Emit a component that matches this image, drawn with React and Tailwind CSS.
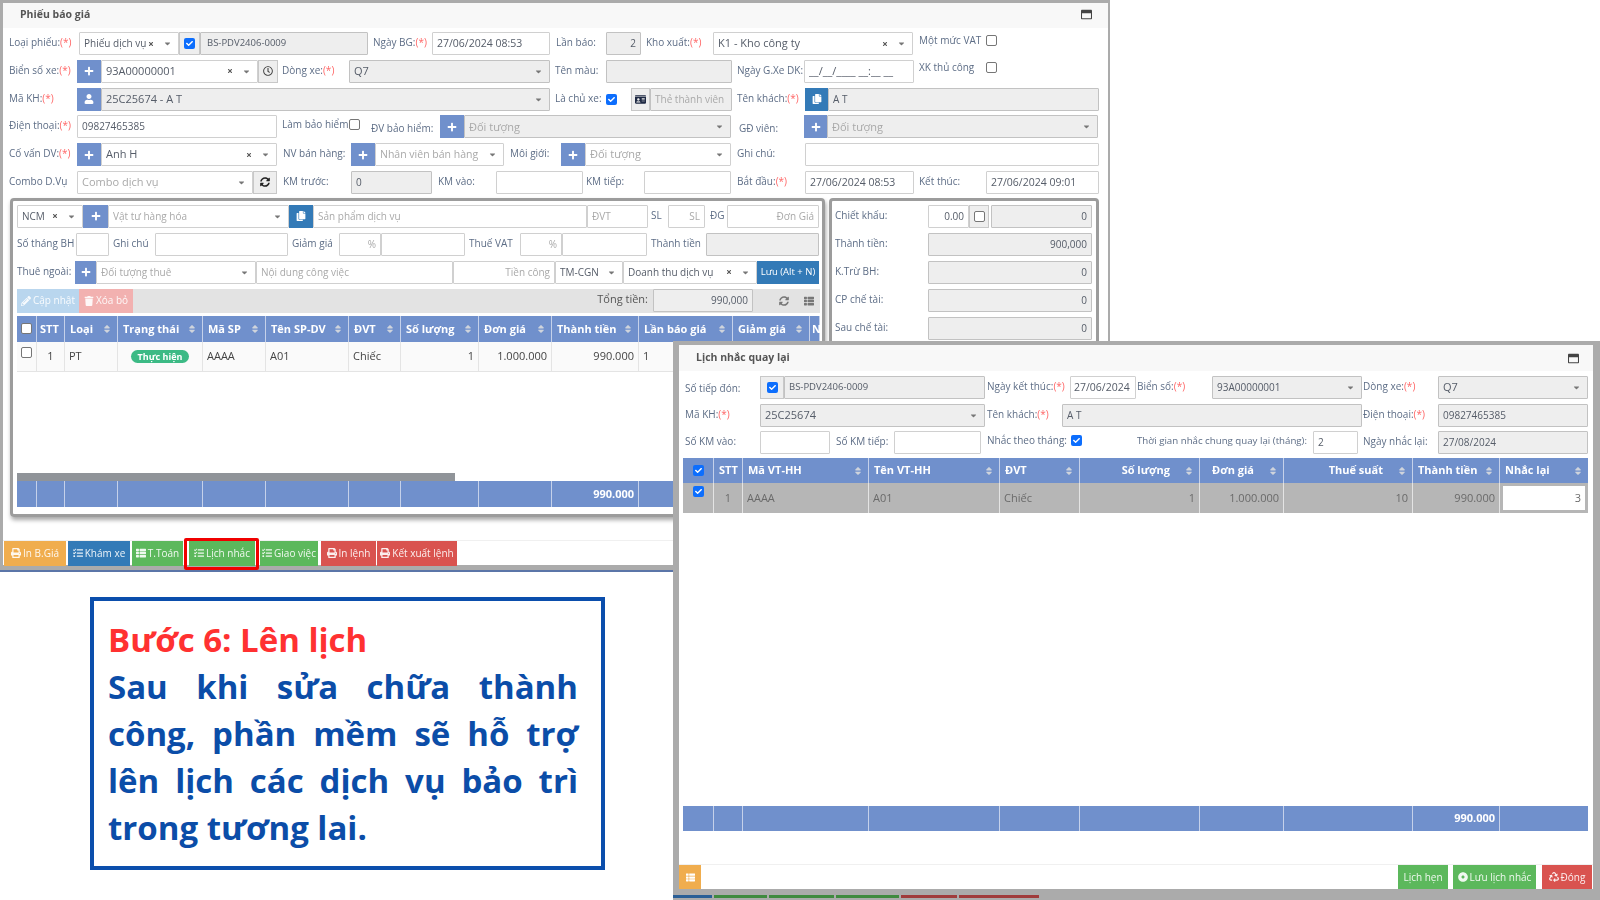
import React from "react";
import {
  FaPlus, FaUser, FaRegClock, FaSyncAlt, FaCopy, FaIdCard, FaPencilAlt, FaTrash, FaPrint, FaTasks,
  FaThList, FaSort, FaCaretDown, FaTimes, FaRecycle, FaDotCircle, FaRegWindowMaximize, FaCheck,
} from "react-icons/fa";

const Req = () => <span className="text-[#f66]">(*)</span>;

function L({ className = "", children, req }) {
  return (
    <div className={`shrink-0 self-start pt-[2px] text-[10px] leading-[16px] whitespace-nowrap text-[#5d6d86] ${className}`}>
      {children}
      {req && <Req />}
    </div>
  );
}

function Field({ className = "", children, dis, right, ph, small }) {
  return (
    <div
      className={`flex h-[23px] shrink-0 items-center overflow-hidden whitespace-nowrap rounded-[1px] border px-[4px] ${
        small ? "text-[10px]" : "text-[11px]"
      } ${dis ? "border-[#c2c2c2] bg-[#eeeeee]" : "border-[#d0d0d0] bg-white"} ${right ? "justify-end" : ""} ${
        ph ? "text-[#a9a9a9]" : "text-[#555c68]"
      } ${className}`}
    >
      {children}
    </div>
  );
}

function Sel({ className = "", children, dis, ph, clear, small }) {
  return (
    <Field className={className} dis={dis} ph={ph} small={small}>
      <span className="min-w-0 flex-1 truncate">{children}</span>
      {clear && <FaTimes className="mr-[9px] size-[6px] shrink-0 text-[#555]" />}
      <FaCaretDown className="mr-[2px] size-[9px] shrink-0 text-[#777]" />
    </Field>
  );
}

function Btn({ className = "", icon: Icon = FaPlus, color = "bg-[#7090cc]" }) {
  return (
    <div className={`flex h-[23px] shrink-0 items-center justify-center text-white ${color} ${className}`}>
      <Icon className="size-[10px]" />
    </div>
  );
}

function Addon({ className = "", children }) {
  return (
    <div className={`flex h-[23px] shrink-0 items-center justify-center border border-[#c8c8c8] bg-[#eeeeee] text-[#444] ${className}`}>
      {children}
    </div>
  );
}

function Chk({ on, className = "" }) {
  return on ? (
    <span className={`flex size-[11px] shrink-0 items-center justify-center rounded-[2px] bg-[#0d6efd] text-white ${className}`}>
      <FaCheck className="size-[7px]" />
    </span>
  ) : (
    <span className={`block size-[11px] shrink-0 rounded-[2px] border border-[#767676] bg-white ${className}`} />
  );
}

const Row = ({ children, className = "" }) => <div className={`flex h-[23px] items-center ${className}`}>{children}</div>;

function Th({ className = "", children, right, noSort }) {
  return (
    <div className={`flex h-full shrink-0 items-center justify-between border-r border-[#c5d1ea] px-[5px] text-[11px] font-bold whitespace-nowrap text-white ${className}`}>
      <span className={right ? "flex-1 text-right pr-[14px]" : ""}>{children}</span>
      {!noSort && <FaSort className="size-[10px] shrink-0 text-[#cfd4dc]" />}
    </div>
  );
}

function Td({ className = "", children }) {
  return (
    <div className={`flex h-full shrink-0 items-center border-r border-[#e4e4e4] px-[4px] text-[11px] whitespace-nowrap ${className}`}>
      {children}
    </div>
  );
}

const Fc = ({ className = "", children }) => (
  <div className={`flex h-full shrink-0 items-center justify-end border-r border-[#c5d1ea] pr-[4px] text-[11px] font-bold text-white ${className}`}>
    {children}
  </div>
);

function Action({ className = "", icon: Icon, children, color }) {
  return (
    <div className={`flex h-[25px] shrink-0 items-center justify-center gap-[2px] text-[10px] whitespace-nowrap text-white/90 ${color} ${className}`}>
      {Icon && <Icon className="size-[10px]" />}
      {children}
    </div>
  );
}

function Quote() {
  return (
    <div className="absolute top-0 left-0 flex h-[572px] w-[1110px] flex-col border-b-[2px] border-[#5b75a8] bg-[#ababab] pt-[3px] pr-[2px] pb-[5px] pl-[3px] blur-[0.5px]">
      <div className="flex min-h-0 flex-1 flex-col bg-white">
        <div className="flex h-[25px] shrink-0 items-center justify-between bg-[#f8f8f8] pr-[16px] pb-[2px] pl-[17px]">
          <span className="text-[10.5px] font-bold text-[#555]">Phiếu báo giá</span>
          <FaRegWindowMaximize className="size-[11px] text-[#444]" />
        </div>

        <div className="flex flex-col gap-[4.8px] pt-[4px] pl-[6px]">
          <Row>
            <L className="w-[70px]" req>Loại phiếu:</L>
            <Sel className="w-[100px]" clear small>Phiếu dịch vụ</Sel>
            <Addon className="w-[21px]"><Chk on /></Addon>
            <Field className="w-[168px] pl-[6px] !text-[9.5px]" dis>BS-PDV2406-0009</Field>
            <L className="w-[64px] pl-[5px]" req>Ngày BG:</L>
            <Field className="w-[118px] !text-[10.5px]">27/06/2024 08:53</Field>
            <L className="w-[56px] pl-[6px]">Lần báo:</L>
            <Field className="w-[35px]" dis right small>2</Field>
            <L className="w-[72px] pl-[5px]" req>Kho xuất:</L>
            <Sel className="w-[200px]" clear>K1 - Kho công ty</Sel>
            <L className="-mt-[2px] w-[73px] pl-[6px]">Một mức VAT</L>
            <Chk className="-mt-[6px]" />
          </Row>
          <Row>
            <L className="w-[68px]" req>Biển số xe:</L>
            <Btn className="w-[24px]" />
            <Sel className="w-[157px]" clear>93A00000001</Sel>
            <Addon className="w-[20px]"><FaRegClock className="size-[10px]" /></Addon>
            <L className="w-[71px] pl-[4px]" req>Dòng xe:</L>
            <Sel className="w-[201px]" dis>Q7</Sel>
            <L className="w-[56px] pl-[5px]">Tên màu:</L>
            <Field className="w-[126px]" dis />
            <L className="w-[72px] pl-[5px]">Ngày G.Xe DK:</L>
            <Field className="w-[110px]">__/__/____ __:__ __</Field>
            <L className="-mt-[3px] w-[72px] pl-[5px]">XK thủ công</L>
            <Chk className="-mt-[7px]" />
          </Row>
          <Row>
            <L className="w-[68px]" req>Mã KH:</L>
            <Btn className="w-[24px]" icon={FaUser} />
            <Sel className="w-[449px]" dis>25C25674 - A T</Sel>
            <L className="w-[56px] pl-[5px]">Là chủ xe:</L>
            <Chk on />
            <span className="w-[14px] shrink-0" />
            <Addon className="w-[19px]"><FaIdCard className="size-[11px] text-[#1f2a44]" /></Addon>
            <Field className="w-[82px]" dis ph small>Thẻ thành viên</Field>
            <L className="w-[73px] pl-[5px]" req>Tên khách:</L>
            <Btn className="w-[23px]" icon={FaCopy} color="bg-[#337ab7]" />
            <Field className="w-[271px]" dis small>A T</Field>
          </Row>
          <Row>
            <L className="w-[68px]" req>Điện thoại:</L>
            <Field className="w-[200px]" small>09827465385</Field>
            <L className="-mt-[1px] w-[72px] pl-[5px]">Làm bảo hiểm</L>
            <Chk className="-mt-[5px]" />
            <span className="w-[1px] shrink-0" />
            <L className="mt-[3px] w-[79px] pl-[10px]">ĐV bảo hiểm:</L>
            <Btn className="w-[24px]" />
            <Sel className="w-[267px]" dis ph>Đối tượng</Sel>
            <L className="mt-[3px] w-[73px] pl-[8px]">GĐ viên:</L>
            <Btn className="w-[23px]" />
            <Sel className="w-[271px]" dis ph>Đối tượng</Sel>
          </Row>
          <Row>
            <L className="w-[68px]" req>Cố vấn DV:</L>
            <Btn className="w-[24px]" />
            <Sel className="w-[176px]" clear>Anh H</Sel>
            <L className="w-[74px] pl-[6px]">NV bán hàng:</L>
            <Btn className="w-[24px]" />
            <Sel className="w-[129px] !text-[10.5px]" ph>Nhân viên bán hàng</Sel>
            <L className="w-[57px] pl-[6px]">Môi giới:</L>
            <Btn className="w-[24px]" />
            <Sel className="w-[146px]" ph>Đối tượng</Sel>
            <L className="w-[74px] pl-[6px]">Ghi chú:</L>
            <Field className="w-[294px]" />
          </Row>
          <Row>
            <L className="w-[68px]">Combo D.Vụ</L>
            <Sel className="w-[176px]" ph>Combo dịch vụ</Sel>
            <Addon className="w-[24px]"><FaSyncAlt className="size-[10px] text-[#222]" /></Addon>
            <L className="w-[74px] pl-[6px]">KM trước:</L>
            <Field className="w-[81px]" dis small>0</Field>
            <L className="w-[64px] pl-[6px]">KM vào:</L>
            <Field className="w-[87px]" />
            <L className="w-[61px] pl-[3px]">KM tiếp:</L>
            <Field className="w-[87px]" />
            <L className="w-[74px] pl-[6px]" req>Bắt đầu:</L>
            <Field className="w-[109px] !text-[10.5px]">27/06/2024 08:53</Field>
            <L className="w-[72px] pl-[5px]">Kết thúc:</L>
            <Field className="w-[113px] !text-[10.5px]">27/06/2024 09:01</Field>
          </Row>
        </div>

        <div className="mt-[4px] ml-[7px] flex gap-[4px]">
          <div className="flex h-[319px] w-[815px] shrink-0 flex-col rounded-[4px] border-[3px] border-[#9c9c9c] pt-[4px] pl-[4px] shadow-[1px_3px_4px_rgba(0,0,0,0.35)]">
            <div className="flex flex-col gap-[5px]">
              <Row>
                <Sel className="w-[66px]" clear small>NCM</Sel>
                <Btn className="w-[25px]" />
                <Sel className="w-[181px]" ph small>Vật tư hàng hóa</Sel>
                <Btn className="w-[24px]" icon={FaCopy} color="bg-[#337ab7]" />
                <Field className="w-[274px]" ph small>Sản phẩm dịch vụ</Field>
                <Field className="w-[61px]" ph small>ĐVT</Field>
                <L className="w-[20px] pl-[3px]">SL</L>
                <Field className="w-[37px]" right ph small>SL</Field>
                <L className="w-[22px] pl-[5px]">ĐG</L>
                <Field className="w-[92px]" right ph small>Đơn Giá</Field>
              </Row>
              <Row>
                <L className="w-[59px]">Số tháng BH</L>
                <Field className="w-[33px]" />
                <L className="w-[46px] pl-[4px]">Ghi chú</L>
                <Field className="w-[133px]" />
                <L className="w-[51px] pl-[4px]">Giảm giá</L>
                <Field className="w-[42px]" right ph small>%</Field>
                <Field className="w-[84px]" />
                <L className="w-[55px] pl-[4px]">Thuế VAT</L>
                <Field className="w-[42px]" right ph small>%</Field>
                <Field className="w-[85px]" />
                <L className="w-[59px] pl-[4px]">Thành tiền</L>
                <Field className="w-[113px]" dis />
              </Row>
              <Row>
                <L className="w-[58px]">Thuê ngoài:</L>
                <Btn className="w-[21px]" />
                <Sel className="w-[160px]" ph small>Đối tượng thuê</Sel>
                <Field className="w-[197px]" ph small>Nội dung công việc</Field>
                <Field className="w-[102px]" right ph small>Tiền công</Field>
                <Sel className="w-[68px]" small>TM-CGN</Sel>
                <Sel className="w-[134px]" clear small>Doanh thu dịch vụ</Sel>
                <div className="flex h-[23px] w-[62px] shrink-0 items-center justify-center bg-[#337ab7] text-[9.5px] whitespace-nowrap text-white">Lưu (Alt + N)</div>
              </Row>
            </div>

            <div className="mt-[5px] flex h-[24px] w-[803px] shrink-0 items-center bg-[#e3e3e3]">
              <Action className="!h-[24px] w-[62px]" icon={FaPencilAlt} color="bg-[#b9d6ee]">Cập nhật</Action>
              <Action className="!h-[24px] w-[54px]" icon={FaTrash} color="bg-[#f2b1b0]">Xóa bỏ</Action>
              <span className="flex-1" />
              <span className="mr-[5px] mb-[4px] text-[11px] text-[#555]">Tổng tiền:</span>
              <Field className="w-[100px]" dis right small>990,000</Field>
              <FaSyncAlt className="ml-[26px] size-[10px] text-[#777]" />
              <FaThList className="mr-[6px] ml-[15px] size-[10px] text-[#777]" />
            </div>

            <div className="mt-[3px] flex h-[26px] w-[803px] shrink-0 overflow-hidden bg-[#7090cc]">
              <Th className="w-[20px] justify-center !px-0" noSort><Chk /></Th>
              <Th className="w-[28px] !px-[3px]" noSort>STT</Th>
              <Th className="w-[53px]">Loại</Th>
              <Th className="w-[85px]">Trạng thái</Th>
              <Th className="w-[63px]">Mã SP</Th>
              <Th className="w-[83px]">Tên SP-DV</Th>
              <Th className="w-[52px]">ĐVT</Th>
              <Th className="w-[78px]">Số lượng</Th>
              <Th className="w-[73px]">Đơn giá</Th>
              <Th className="w-[87px]">Thành tiền</Th>
              <Th className="w-[94px]">Lần báo giá</Th>
              <Th className="w-[77px]">Giảm giá</Th>
              <Th className="w-[10px] !px-[2px]" noSort>N</Th>
            </div>
            <div className="flex h-[30px] w-[803px] shrink-0 border-b border-[#e4e4e4] bg-[#fafafa] text-[#444]">
              <Td className="w-[20px] justify-center !items-start !px-0 pt-[5px]"><Chk /></Td>
              <Td className="w-[28px] justify-center">1</Td>
              <Td className="w-[53px]">PT</Td>
              <Td className="w-[85px] justify-center">
                <span className="rounded-full bg-[#3cba85] px-[7px] text-[9px] leading-[13px] font-bold text-white">Thực hiện</span>
              </Td>
              <Td className="w-[63px]">AAAA</Td>
              <Td className="w-[83px]">A01</Td>
              <Td className="w-[52px]">Chiếc</Td>
              <Td className="w-[78px] justify-end">1</Td>
              <Td className="w-[73px] justify-end">1.000.000</Td>
              <Td className="w-[87px] justify-end">990.000</Td>
              <Td className="w-[94px]">1</Td>
            </div>
            <div className="h-[101px] shrink-0" />
            <div className="h-[8px] w-[438px] shrink-0 bg-[#909499]" />
            <div className="flex h-[26px] w-[803px] shrink-0 bg-[#7090cc]">
              <Fc className="w-[20px]" />
              <Fc className="w-[28px]" />
              <Fc className="w-[53px]" />
              <Fc className="w-[85px]" />
              <Fc className="w-[63px]" />
              <Fc className="w-[83px]" />
              <Fc className="w-[52px]" />
              <Fc className="w-[78px]" />
              <Fc className="w-[73px]" />
              <Fc className="w-[87px]">990.000</Fc>
            </div>
          </div>

          <div className="flex h-[319px] w-[270px] shrink-0 flex-col gap-[5px] rounded-[4px] border-[3px] border-[#9c9c9c] pt-[4px] pl-[3px]">
            <Row>
              <L className="w-[93px]">Chiết khấu:</L>
              <Field className="w-[41px]" right small>0.00</Field>
              <Addon className="w-[20px]"><Chk /></Addon>
              <Field className="ml-[2px] w-[101px]" dis right small>0</Field>
            </Row>
            <Row>
              <L className="w-[93px]">Thành tiền:</L>
              <Field className="w-[164px]" dis right small>900,000</Field>
            </Row>
            <Row>
              <L className="w-[93px]">K.Trừ BH:</L>
              <Field className="w-[164px]" dis right small>0</Field>
            </Row>
            <Row>
              <L className="w-[93px]">CP chế tài:</L>
              <Field className="w-[164px]" dis right small>0</Field>
            </Row>
            <Row>
              <L className="w-[93px]">Sau chế tài:</L>
              <Field className="w-[164px]" dis right small>0</Field>
            </Row>
          </div>
        </div>

        <div className="mt-[23px] flex items-start border-t border-[#f0f0f0] pl-[1px]">
          <Action className="w-[62px]" icon={FaPrint} color="bg-[#f0ad4e]">In B.Giá</Action>
          <Action className="ml-[2px] w-[62px]" icon={FaTasks} color="bg-[#337ab7]">Khám xe</Action>
          <Action className="ml-[2px] w-[51px]" icon={FaThList} color="bg-[#5cb85c]">T.Toán</Action>
          <div className="relative ml-[6px] w-[66px]">
            <Action className="w-[66px]" icon={FaTasks} color="bg-[#5cb85c]">Lịch nhắc</Action>
            <div className="absolute -top-[3px] -right-[4px] -bottom-[4px] -left-[5px] rounded-[2px] border-[3px] border-[#f00000]" />
          </div>
          <Action className="ml-[5px] w-[58px]" icon={FaTasks} color="bg-[#5cb85c]">Giao việc</Action>
          <Action className="ml-[3px] w-[55px]" icon={FaPrint} color="bg-[#d9534f]">In lệnh</Action>
          <Action className="ml-[1px] w-[80px]" icon={FaPrint} color="bg-[#d9534f]">Kết xuất lệnh</Action>
        </div>
      </div>
    </div>
  );
}

function Reminder() {
  return (
    <div className="absolute top-[341px] left-[673px] flex h-[559px] w-[927px] flex-col bg-[#ababab] pt-[4px] pr-[7px] pl-[6px] blur-[0.5px]">
      <div className="flex h-[544px] shrink-0 flex-col bg-white">
        <div className="flex h-[26px] shrink-0 items-center justify-between bg-[#f8f8f8] pr-[14px] pl-[17px]">
          <span className="text-[10.5px] font-bold text-[#555]">Lịch nhắc quay lại</span>
          <FaRegWindowMaximize className="size-[11px] text-[#444]" />
        </div>

        <div className="flex flex-col gap-[4.5px] pt-[5px] pl-[6px]">
          <Row>
            <L className="mt-[2px] w-[75px]">Số tiếp đón:</L>
            <Addon className="w-[24px]"><Chk on /></Addon>
            <Field className="w-[201px] !text-[9.5px]" dis>BS-PDV2406-0009</Field>
            <L className="w-[85px] pl-[2px]" req>Ngày kết thúc:</L>
            <Field className="w-[66px] !px-[3px] !text-[10.5px]">27/06/2024</Field>
            <L className="w-[76px] pl-[1px]" req>Biển số:</L>
            <Sel className="w-[150px]" dis small>93A00000001</Sel>
            <L className="w-[76px] pl-[1px]" req>Dòng xe:</L>
            <Sel className="w-[150px]" dis>Q7</Sel>
          </Row>
          <Row>
            <L className="w-[75px]" req>Mã KH:</L>
            <Sel className="w-[225px]" dis>25C25674</Sel>
            <L className="w-[77px] pl-[2px]" req>Tên khách:</L>
            <Field className="w-[300px]" dis small>A T</Field>
            <L className="w-[76px] pl-[1px]" req>Điện thoại:</L>
            <Field className="w-[150px]" dis small>09827465385</Field>
          </Row>
          <Row>
            <L className="w-[75px]">Số KM vào:</L>
            <Field className="w-[70px]" />
            <L className="w-[64px] pl-[6px]">Số KM tiếp:</L>
            <Field className="w-[87px]" />
            <L className="-mt-[1px] w-[90px] pl-[6px]">Nhắc theo tháng:</L>
            <Chk on className="-mt-[4px]" />
            <L className="w-[231px] pl-[55px] !text-[9.7px]">Thời gian nhắc chung quay lại (tháng):</L>
            <Field className="w-[45px]" small>2</Field>
            <L className="w-[80px] pl-[5px]">Ngày nhắc lại:</L>
            <Field className="w-[150px]" dis small>27/08/2024</Field>
          </Row>
        </div>

        <div className="mt-[4px] ml-[4px] flex h-[25px] w-[905px] shrink-0 bg-[#7090cc]">
          <Th className="w-[31px] justify-center !px-0" noSort><Chk on /></Th>
          <Th className="w-[29px] !px-[5px]" noSort>STT</Th>
          <Th className="w-[126px]">Mã VT-HH</Th>
          <Th className="w-[131px]">Tên VT-HH</Th>
          <Th className="w-[80px]">ĐVT</Th>
          <Th className="w-[120px]" right>Số lượng</Th>
          <Th className="w-[84px]" right>Đơn giá</Th>
          <Th className="w-[129px]" right>Thuế suất</Th>
          <Th className="w-[87px]">Thành tiền</Th>
          <Th className="w-[88px] border-r-0">Nhắc lại</Th>
        </div>
        <div className="ml-[4px] flex h-[30px] w-[905px] shrink-0 bg-[#b6b6b6] text-[#6a6a6a]">
          <Td className="w-[31px] !items-start justify-center border-[#c4c4c4] !px-0 pt-[3px]"><Chk on /></Td>
          <Td className="w-[29px] justify-center border-[#c4c4c4]">1</Td>
          <Td className="w-[126px] border-[#c4c4c4]">AAAA</Td>
          <Td className="w-[131px] border-[#c4c4c4]">A01</Td>
          <Td className="w-[80px] border-[#c4c4c4]">Chiếc</Td>
          <Td className="w-[120px] justify-end border-[#c4c4c4]">1</Td>
          <Td className="w-[84px] justify-end border-[#c4c4c4]">1.000.000</Td>
          <Td className="w-[129px] justify-end border-[#c4c4c4]">10</Td>
          <Td className="w-[87px] justify-end border-[#c4c4c4]">990.000</Td>
          <div className="flex w-[88px] shrink-0 items-center py-[3px] pr-[3px] pl-[3px]">
            <div className="flex h-full w-full items-center justify-end bg-white pr-[4px] text-[11px]">3</div>
          </div>
        </div>

        <div className="h-[293px] shrink-0" />

        <div className="ml-[4px] flex h-[25px] w-[905px] shrink-0 bg-[#7090cc]">
          <Fc className="w-[31px]" />
          <Fc className="w-[29px]" />
          <Fc className="w-[126px]" />
          <Fc className="w-[131px]" />
          <Fc className="w-[80px]" />
          <Fc className="w-[120px]" />
          <Fc className="w-[84px]" />
          <Fc className="w-[129px]" />
          <Fc className="w-[87px]">990.000</Fc>
        </div>

        <div className="mt-[33px] flex flex-1 items-stretch border-t border-[#f0f0f0]">
          <div className="flex w-[22px] items-center justify-center bg-[#f0ad4e] text-white"><FaThList className="size-[9px]" /></div>
          <span className="flex-1" />
          <Action className="!h-auto w-[50px]" color="bg-[#5cb85c]">Lịch hẹn</Action>
          <Action className="!h-auto ml-[5px] w-[83px]" icon={FaDotCircle} color="bg-[#5cb85c]">Lưu lịch nhắc</Action>
          <Action className="!h-auto ml-[6px] mr-[1px] w-[50px]" icon={FaRecycle} color="bg-[#d9534f]">Đóng</Action>
        </div>
      </div>
      <div className="mt-[6px] flex h-[3px] shrink-0 -ml-[6px] gap-[2px]">
        <span className="w-[39px] bg-[#2a5f96]" />
        <span className="w-[53px] bg-[#3f8a3f]" />
        <span className="w-[65px] bg-[#3f8a3f]" />
        <span className="w-[63px] bg-[#3f8a3f]" />
        <span className="w-[56px] bg-[#a03c3c]" />
        <span className="w-[80px] bg-[#a03c3c]" />
      </div>
    </div>
  );
}

function Note() {
  return (
    <div className="absolute top-[597px] left-[90px] h-[273px] w-[515px] border-[4px] border-[#0b4eac] pt-[15px] pr-[23px] pl-[14px] text-[33px] leading-[47px] font-bold text-[#0b4da8]">
      <div className="text-[#ff3131]">Bước 6: Lên lịch</div>
      <div className="text-justify">Sau khi sửa chữa thành công, phần mềm sẽ hỗ trợ lên lịch các dịch vụ bảo trì trong tương lai.</div>
    </div>
  );
}

export default function App() {
  return (
    <div className="relative h-[900px] w-[1600px] overflow-hidden bg-white font-['Open_Sans',sans-serif]">
      <Quote />
      <Note />
      <Reminder />
    </div>
  );
}
